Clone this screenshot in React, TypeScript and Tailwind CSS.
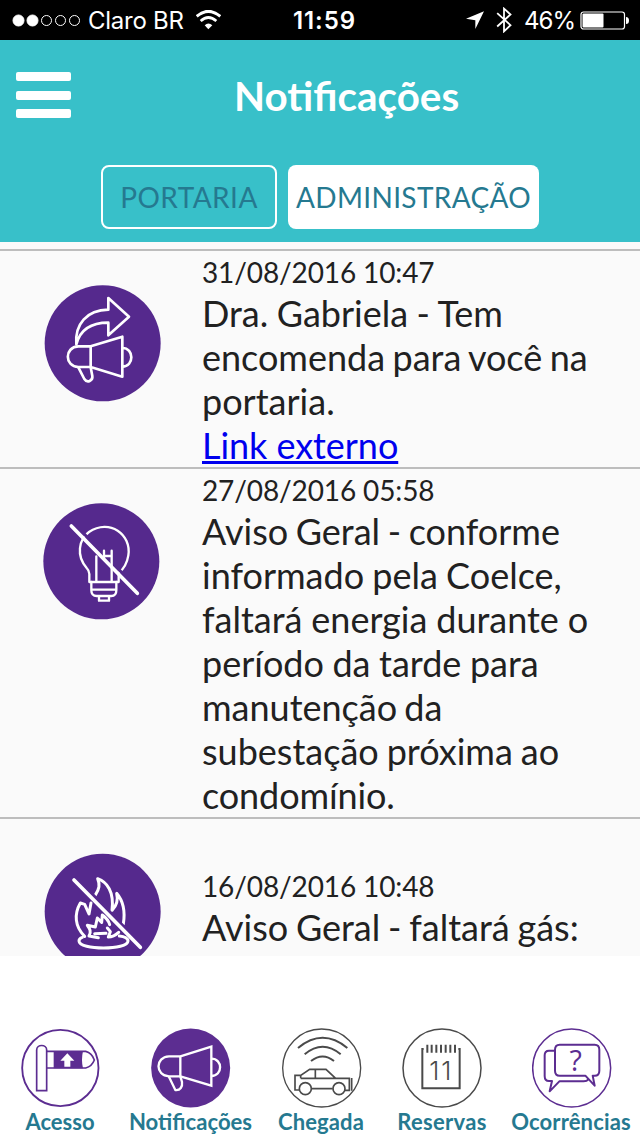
import { type ReactNode } from "react";

const BulletSignal = () => (
  <div className="ml-[12px] flex gap-[1px]">
    {[true, true, false, false, false].map((filled, index) => (
      <svg key={index} viewBox="0 0 13 13" className="h-[13px] w-[13px]">
        <circle cx="6.5" cy="6.5" r={filled ? 5.5 : 5} fill={filled ? "#fff" : "none"} stroke="#fff" strokeWidth="1" />
      </svg>
    ))}
  </div>
);

const StatusBar = () => (
  <div className="flex h-10 items-center bg-black font-['Inter',sans-serif] text-white">
    <div className="flex w-[293px] items-center">
      <BulletSignal />
      <span className="ml-[7px] w-[97px] whitespace-nowrap pt-px text-[24px] leading-[40px] tracking-[-0.25px]">Claro BR</span>
      <svg viewBox="0 0 75 60" className="ml-[11px] h-5 w-[25px]" fill="none" stroke="#fff">
        <path d="M2 19Q37 -11 73 19" strokeWidth="9" />
        <path d="M14 33Q37 12 61 33" strokeWidth="8" />
        <path d="M26 46Q37 35 49 46L37 58Z" fill="#fff" stroke="none" />
      </svg>
    </div>
    <span className="w-[173px] whitespace-nowrap pt-px text-[24px] font-semibold leading-[40px] tracking-[0.9px]">11:59</span>
    <svg viewBox="0 0 54 54" className="h-[18px] w-[18px]">
      <path d="M54 1L28 54V28L0 23Z" fill="#fff" />
    </svg>
    <svg viewBox="0 0 46 80" className="ml-[12px] h-[26px] w-[16px]" fill="none" stroke="#fff" strokeWidth="5.5">
      <path d="M2 19L43 56L23 75V5L43 23L2 60" />
    </svg>
    <span className="ml-[12px] w-[56px] whitespace-nowrap pt-px text-[24px] leading-[40px] tracking-[-0.9px]">46%</span>
    <svg viewBox="0 0 49 19" className="h-[19px] w-[49px] shrink-0">
      <rect x="1" y="1" width="43.5" height="17" rx="2.5" fill="none" stroke="#fff" strokeWidth="1.2" />
      <rect x="2.5" y="2.5" width="21" height="14" rx="1" fill="#fff" />
      <path d="M46 6Q49 6 49 9.5T46 13Z" fill="#fff" />
    </svg>
  </div>
);

const Header = () => (
  <header className="h-[202px] bg-[#38c0c9]">
    <div className="flex h-[125px] items-start">
      <div className="ml-4 mt-8 flex w-[55px] flex-col gap-[9.5px]">
        <div className="h-[9px] rounded-[2px] bg-white" />
        <div className="h-[9px] rounded-[2px] bg-white" />
        <div className="h-[9px] rounded-[2px] bg-white" />
      </div>
      <h1 className="ml-[163px] mt-[31px] text-[40.4px] font-bold leading-[50px] text-white">Notificações</h1>
    </div>
    <div className="ml-[101px] flex gap-[11px]">
      <button className="h-16 w-[176px] rounded-lg border-2 border-white pb-px text-[28px] tracking-[0.45px] text-[#257990]">PORTARIA</button>
      <button className="h-16 w-[251px] rounded-lg bg-white pb-px text-[28px] tracking-[0.35px] text-[#257990]">ADMINISTRAÇÃO</button>
    </div>
  </header>
);

const ShareIcon = () => (
  <svg viewBox="42 30 351 351" className="h-[117px] w-[117px]" fill="none" stroke="#fff" strokeWidth="8" strokeLinejoin="round">
    <circle cx="218" cy="205" r="174" fill="#55298d" stroke="none" />
    <path d="M139 208C134 148 170 105 235 104V69L297 125L235 181V143C188 143 151 162 139 208Z" />
    <path d="M182 214H145C103 216 103 274 145 276H182ZM182 214L277 185V305L182 276" />
    <path d="M277 219C313 219 313 275 277 275M145 277L163 312C172 326 189 317 187 303L182 277" />
  </svg>
);

const NoEnergyIcon = () => (
  <svg viewBox="39 39 351 351" className="h-[117px] w-[117px]" fill="none" stroke="#fff" strokeWidth="7" strokeLinecap="round" strokeLinejoin="round">
    <circle cx="214" cy="214" r="174" fill="#55298d" stroke="none" />
    <path d="M184 276H259M184 276V301Q184 318 200 318H244Q259 318 259 301V276M184 299H259M207 319V332H237V319" />
    <path d="M184 276H178V252Q177 241 170 234C138 197 146 149 177 126C239 84 305 134 295 196C291 222 277 240 266 249V276H259" />
    <path d="M135 104L331 305" stroke="#55298d" strokeWidth="9" />
    <path d="M199 199V275M245 182V275M222 182V204M222 198H245" />
    <path d="M124 108L322 310" strokeWidth="11" />
  </svg>
);

const NoGasIcon = () => (
  <svg viewBox="42 39 351 351" className="h-[117px] w-[117px]" fill="none" stroke="#fff" strokeWidth="9" strokeLinecap="round" strokeLinejoin="round">
    <circle cx="218" cy="215" r="174" fill="#55298d" stroke="none" />
    <path d="M164 289C134 260 132 222 151 189L164 193L177 222L183 189M195 167C209 146 210 134 203 116C231 126 253 155 246 211C259 198 265 180 260 160C278 181 286 215 280 252" />
    <path d="M205 293L177 288C185 274 179 266 172 256L196 261L202 234L215 247L217 225Q235 238 239 254M232 264L241 275L235 291Q251 291 266 277M194 281L228 280" />
    <path d="M268 288C285 289 294 296 294 303C294 331 147 331 147 303C147 299 150 294 157 292" />
    <path d="M140 114L338 318" stroke="#55298d" strokeWidth="9" />
    <path d="M132 120L331 322" strokeWidth="11" />
  </svg>
);

const notifications = [
  {
    icon: <ShareIcon />,
    date: "31/08/2016 10:47",
    lines: [
      { text: "Dra. Gabriela - Tem", spacing: "[word-spacing:-0.7px]" },
      { text: "encomenda para você na", spacing: "[word-spacing:-1.8px]" },
      { text: "portaria.", spacing: "" },
    ],
    link: "Link externo",
    iconClass: "pl-[44px] pt-[34px]",
    rowClass: "h-[218px]",
    textClass: "",
  },
  {
    icon: <NoEnergyIcon />,
    date: "27/08/2016 05:58",
    lines: [
      { text: "Aviso Geral - conforme", spacing: "[word-spacing:-1.6px]" },
      { text: "informado pela Coelce,", spacing: "[word-spacing:-1px]" },
      { text: "faltará energia durante o", spacing: "[word-spacing:-0.3px]" },
      { text: "período da tarde para", spacing: "[word-spacing:-0.7px]" },
      { text: "manutenção da", spacing: "[word-spacing:-2px]" },
      { text: "subestação próxima ao", spacing: "[word-spacing:-1.3px]" },
      { text: "condomínio.", spacing: "tracking-[-0.1px]" },
    ],
    iconClass: "pl-[43px] pt-[34px]",
    rowClass: "h-[350px]",
    textClass: "",
  },
  {
    icon: <NoGasIcon />,
    date: "16/08/2016 10:48",
    lines: [{ text: "Aviso Geral - faltará gás:", spacing: "[word-spacing:-1.4px]" }],
    iconClass: "pl-[44px] pt-[34px]",
    rowClass: "h-[190px]",
    textClass: "pt-[46px]",
  },
];

const NotificationList = () => (
  <main className="h-[714px] overflow-hidden bg-[#fafafa] pt-[7px]">
    {notifications.map((item) => (
      <div key={item.date} className={`flex border-t-2 border-[#bdbdbd] ${item.rowClass}`}>
        <div className={`w-[202px] shrink-0 ${item.iconClass}`}>{item.icon}</div>
        <div className={`whitespace-nowrap text-[#212121] ${item.textClass}`}>
          <p className="h-10 text-[28px] leading-[42px] tracking-[-0.12px]">{item.date}</p>
          {item.lines.map((line) => (
            <p key={line.text} className={`text-[36px] leading-[44px] ${line.spacing}`}>{line.text}</p>
          ))}
          {item.link && <a href="#" className="inline-block text-[36px] leading-[44px] tracking-[-0.05px] text-[#0000ee] underline">{item.link}</a>}
        </div>
      </div>
    ))}
  </main>
);

const NavIcon = ({ box, children }: { box: string; children: ReactNode }) => (
  <svg viewBox={box} className="h-20 w-20" fill="none" strokeWidth="5">
    {children}
  </svg>
);

const navItems = [
  {
    label: "Acesso",
    width: "w-[120px]",
    labelClass: "",
    icon: (
      <NavIcon box="60 36 240 240">
        <g stroke="#5c2d91">
          <circle cx="181" cy="156" r="114.5" strokeWidth="5.5" />
          <path d="M110 224V102C110 84 140 84 140 102V224Z" />
          <path d="M140 106H257Q276 111 283 132Q276 151 257 156H140" />
          <path d="M161 105H249Q243 131 249 157H161Z" fill="#5c2d91" stroke="none" />
          <path d="M202 112L223 134H211V152H193V134H181Z" fill="#fff" stroke="none" />
        </g>
      </NavIcon>
    ),
  },
  {
    label: "Notificações",
    width: "w-[142px]",
    labelClass: "-ml-px text-[22.1px]",
    icon: (
      <NavIcon box="452 36 240 240">
        <circle cx="571" cy="156" r="118.5" fill="#5c2d91" />
        <g stroke="#fff" strokeWidth="7">
          <path d="M540 121H506C464 123 464 179 506 181H540ZM540 121L633 92V209L540 181" />
          <path d="M633 128C668 128 668 180 633 180M505 181L525 222C540 224 547 212 545 198L540 181" />
        </g>
      </NavIcon>
    ),
  },
  {
    label: "Chegada",
    width: "w-[120px]",
    labelClass: "-ml-[2px] tracking-[0.1px]",
    icon: (
      <NavIcon box="66 36 240 240">
        <g stroke="#4a4a4a">
          <circle cx="185" cy="156" r="117" strokeWidth="4" />
          <path d="M114 96Q188 35 262 96M134 115Q188 70 242 115M153 135Q188 108 222 135" strokeWidth="6" />
          <path d="M118 222H105V178H122L149 160H198L227 187H268V223H255M155 218H218M122 187H227M166 160V187M122 178V187M275 186V224" strokeWidth="5" />
          <circle cx="136" cy="218" r="18" strokeWidth="5" />
          <circle cx="237" cy="218" r="18" strokeWidth="5" />
        </g>
      </NavIcon>
    ),
  },
  {
    label: "Reservas",
    width: "w-[120px]",
    labelClass: "tracking-[0.3px]",
    icon: (
      <NavIcon box="426 36 240 240">
        <g stroke="#4a4a4a">
          <circle cx="546" cy="156" r="117" strokeWidth="4.5" />
          <path d="M491 99H487V217H599V99H595" strokeWidth="6" />
          <path d="M502 86V110M515 86V110M529 86V110M543 86V110M557 86V110M571 86V110M585 86V110" strokeWidth="6" />
          <text x="508 544" y="193" fill="#4a4a4a" stroke="none" fontSize="77" className="font-['Inter',sans-serif] font-light">11</text>
        </g>
      </NavIcon>
    ),
  },
  {
    label: "Ocorrências",
    width: "w-[140px]",
    labelClass: "-ml-[2px] tracking-[0.15px]",
    icon: (
      <NavIcon box="126 36 240 240">
        <g stroke="#5c2d91" strokeWidth="6" strokeLinejoin="round">
          <circle cx="245" cy="156" r="117" strokeWidth="4.5" />
          <path d="M209 86H314Q328 86 328 101V164Q328 179 314 179H308L314 209L286 179H209Q195 179 195 164V101Q195 86 209 86Z" />
          <path d="M194 104H177Q164 104 164 118V180Q164 195 177 195H186L179 226L208 196H281Q291 196 295 190" />
          <text x="257" y="164" fill="#5c2d91" stroke="none" fontSize="86" textAnchor="middle" className="font-['Open_Sans',sans-serif]">?</text>
        </g>
      </NavIcon>
    ),
  },
];

const BottomNav = () => (
  <nav className="flex h-[180px] bg-white pt-[72px]">
    {navItems.map((item) => (
      <div key={item.label} className={`flex shrink-0 flex-col items-center ${item.width}`}>
        {item.icon}
        <span className={`whitespace-nowrap font-bold leading-[28px] text-[#257990] ${item.labelClass || "tracking-normal"} ${item.label === "Notificações" ? "" : "text-[22px]"}`}>{item.label}</span>
      </div>
    ))}
  </nav>
);

const App = () => {
  return (
    <div className="h-[1136px] w-[640px] overflow-hidden bg-white font-['Lato',sans-serif]">
      <StatusBar />
      <Header />
      <NotificationList />
      <BottomNav />
    </div>
  );
};

export default App;
